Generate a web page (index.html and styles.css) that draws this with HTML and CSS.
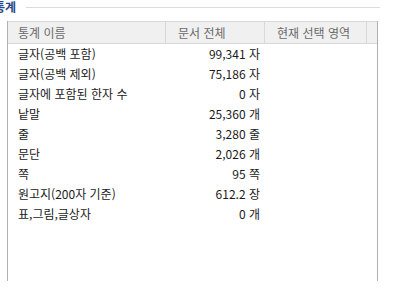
FILE: index.html
```html
<!DOCTYPE html>
<html lang="ko">
<head>
<meta charset="utf-8">
<link rel="stylesheet" href="styles.css">
</head>
<body>
<div class="title-row">
  <span class="title">통계</span>
  <span class="title-line"></span>
</div>
<div class="list">
  <div class="row head">
    <div class="c c1">통계 이름</div>
    <div class="c c2">문서 전체</div>
    <div class="c c3">현재 선택 영역</div>
    <div class="c c4"></div>
  </div>
  <div class="row"><div class="c1">글자(공백 포함)</div><div class="c2 num">99,341 자</div><div class="c3"></div><div></div></div>
  <div class="row"><div class="c1">글자(공백 제외)</div><div class="c2 num">75,186 자</div><div class="c3"></div><div></div></div>
  <div class="row"><div class="c1">글자에 포함된 한자 수</div><div class="c2 num">0 자</div><div class="c3"></div><div></div></div>
  <div class="row"><div class="c1">낱말</div><div class="c2 num">25,360 개</div><div class="c3"></div><div></div></div>
  <div class="row"><div class="c1">줄</div><div class="c2 num">3,280 줄</div><div class="c3"></div><div></div></div>
  <div class="row"><div class="c1">문단</div><div class="c2 num">2,026 개</div><div class="c3"></div><div></div></div>
  <div class="row"><div class="c1">쪽</div><div class="c2 num">95 쪽</div><div class="c3"></div><div></div></div>
  <div class="row"><div class="c1">원고지(200자 기준)</div><div class="c2 num">612.2 장</div><div class="c3"></div><div></div></div>
  <div class="row"><div class="c1">표,그림,글상자</div><div class="c2 num">0 개</div><div class="c3"></div><div></div></div>
</div>
</body>
</html>
```
FILE: styles.css
```css
html, body {
  margin: 0;
  padding: 0;
  background: #ffffff;
  overflow: hidden;
}
body {
  width: 395px;
  height: 292px;
  font-family: "Noto Sans CJK KR", "Noto Sans", sans-serif;
  font-size: 12px;
  color: #1b1b1b;
}
.title-row {
  display: flex;
  align-items: center;
  height: 14px;
  margin-left: -6px;
  margin-right: 15px;
}
.title {
  font-weight: bold;
  color: #1f4a8c;
  line-height: 14px;
  font-size: 12px;
}
.title-line {
  flex: 1;
  margin-left: 10px;
  margin-top: 1px;
  border-top: 1px solid #dcdcdc;
}
.list {
  margin-top: 7px;
  margin-left: 7px;
  width: 369px;
  height: 260px;
  border-left: 1px solid #b0b0b0;
  border-right: 1px solid #b0b0b0;
}
.row {
  display: grid;
  grid-template-columns: 158px 99px 102px 10px;
  height: 20px;
  line-height: 20px;
  white-space: nowrap;
}
.row .c1 {
  padding-left: 10px;
}
.num {
  text-align: right;
  padding-right: 5px;
}
.head {
  height: 21px;
  line-height: 21px;
  background: #f0f0f0;
  border-top: 1px solid #d8d8d8;
  border-bottom: 1px solid #d8d8d8;
  color: #6a6a6a;
}
.head .c {
  border-right: 1px solid #d8d8d8;
}
.head .c4 {
  border-right: none;
}
.head .c2, .head .c3 {
  padding-left: 12px;
}
```
